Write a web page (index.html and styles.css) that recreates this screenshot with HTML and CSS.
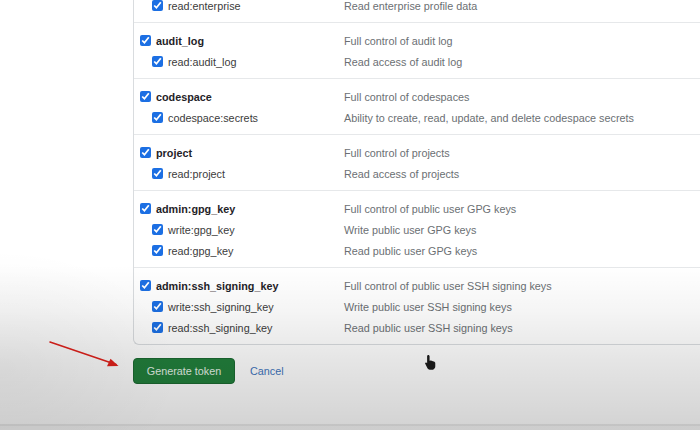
FILE: index.html
```html
<!DOCTYPE html>
<html lang="en">
<head>
<meta charset="utf-8">
<title>Scopes</title>
<link rel="stylesheet" href="styles.css">
</head>
<body>
<div class="page">
  <div class="scopes">
    <div class="group group-first">
      <label class="row child"><span class="name"><input type="checkbox" checked>read:enterprise</span><span class="desc">Read enterprise profile data</span></label>
    </div>
    <div class="group">
      <label class="row parent"><span class="name"><input type="checkbox" checked>audit_log</span><span class="desc">Full control of audit log</span></label>
      <label class="row child"><span class="name"><input type="checkbox" checked>read:audit_log</span><span class="desc">Read access of audit log</span></label>
    </div>
    <div class="group">
      <label class="row parent"><span class="name"><input type="checkbox" checked>codespace</span><span class="desc">Full control of codespaces</span></label>
      <label class="row child"><span class="name"><input type="checkbox" checked>codespace:secrets</span><span class="desc">Ability to create, read, update, and delete codespace secrets</span></label>
    </div>
    <div class="group">
      <label class="row parent"><span class="name"><input type="checkbox" checked>project</span><span class="desc">Full control of projects</span></label>
      <label class="row child"><span class="name"><input type="checkbox" checked>read:project</span><span class="desc">Read access of projects</span></label>
    </div>
    <div class="group">
      <label class="row parent"><span class="name"><input type="checkbox" checked>admin:gpg_key</span><span class="desc">Full control of public user GPG keys</span></label>
      <label class="row child"><span class="name"><input type="checkbox" checked>write:gpg_key</span><span class="desc">Write public user GPG keys</span></label>
      <label class="row child"><span class="name"><input type="checkbox" checked>read:gpg_key</span><span class="desc">Read public user GPG keys</span></label>
    </div>
    <div class="group">
      <label class="row parent"><span class="name"><input type="checkbox" checked>admin:ssh_signing_key</span><span class="desc">Full control of public user SSH signing keys</span></label>
      <label class="row child"><span class="name"><input type="checkbox" checked>write:ssh_signing_key</span><span class="desc">Write public user SSH signing keys</span></label>
      <label class="row child"><span class="name"><input type="checkbox" checked>read:ssh_signing_key</span><span class="desc">Read public user SSH signing keys</span></label>
    </div>
  </div>
  <div class="actions">
    <button class="btn-primary" type="button">Generate token</button>
    <a class="cancel" href="#">Cancel</a>
  </div>
</div>

<svg class="arrow" width="80" height="34" viewBox="0 0 80 34" aria-hidden="true">
  <line x1="1" y1="1" x2="67" y2="23.5" stroke="#e3221c" stroke-width="1.6" stroke-linecap="round"/>
  <path d="M69.5 25 L58 25.3 L61.5 17.8 Z" fill="#e3221c"/>
</svg>

<svg class="cursor" width="14" height="17" viewBox="0 0 16 20" aria-hidden="true">
  <path d="M6 1.2c.8 0 1.5.7 1.5 1.5v5.2l1.2-.2 1.4.3 1.3.4 1.2.4c.9.3 1.6 1 1.6 2v4c0 1.6-1 3-2.6 3.7H7.6c-1 0-2-.8-2.6-1.7L2.4 11.6c-.4-.7 0-1.5.8-1.7.5-.1 1 .2 1.3.6l.1.6V2.7c0-.8.6-1.5 1.4-1.5z" fill="#1c1c1c"/>
</svg>

<div class="vignette" aria-hidden="true"></div>
</body>
</html>
```

FILE: styles.css
```css
html, body {
  margin: 0;
  padding: 0;
  background: #ffffff;
  width: 700px;
  height: 430px;
  overflow: hidden;
}

body {
  font-family: "Liberation Sans", Arial, sans-serif;
  font-size: 10.8px;
  color: #333333;
  position: relative;
}

.page {
  padding-left: 133px;
}

.scopes {
  margin-top: -5px;
  margin-right: -20px;
  background: #ffffff;
  border-left: 1px solid #d9dcdf;
  border-bottom: 1px solid #d9dcdf;
  border-bottom-left-radius: 6px;
}

.group {
  padding: 7px 0 6px 6px;
  border-top: 1px solid #e6e8ea;
}

.group-first {
  border-top: 0;
  padding-top: 0;
}

.row {
  display: grid;
  grid-template-columns: 204px 1fr;
  height: 21px;
  align-items: center;
  cursor: default;
}

.name {
  display: flex;
  align-items: center;
  gap: 5px;
  white-space: nowrap;
}

.child .name {
  padding-left: 12px;
  color: #3c3c3c;
}

.parent .name {
  font-weight: bold;
  color: #1f2328;
}

.desc {
  color: #6b6f73;
  white-space: nowrap;
}

input[type="checkbox"] {
  width: 11px;
  height: 11px;
  margin: 0;
  accent-color: #1c6fe3;
  flex: none;
}

.actions {
  display: flex;
  align-items: center;
  gap: 15px;
  margin-top: 13px;
}

.btn-primary {
  font-family: inherit;
  font-size: 10.8px;
  height: 26px;
  width: 102px;
  padding: 0;
  border: 1px solid #1b6a31;
  border-radius: 4px;
  background: #22803c;
  color: #e4f2e7;
  cursor: pointer;
}

.cancel {
  color: #4175bd;
  text-decoration: none;
  font-size: 10.8px;
}

.arrow {
  position: absolute;
  left: 49px;
  top: 341px;
}

.cursor {
  position: absolute;
  left: 423px;
  top: 354px;
}

.vignette {
  position: absolute;
  inset: 0;
  pointer-events: none;
  background:
    linear-gradient(to bottom, rgba(0,0,0,0) 424px, rgba(0,0,0,0.08) 424px, rgba(0,0,0,0.08) 426px, rgba(0,0,0,0.03) 426px),
    radial-gradient(ellipse 180px 120px at 0% 86%, rgba(0,0,0,0.05), rgba(0,0,0,0) 100%),
    linear-gradient(to bottom, rgba(0,0,0,0) 0, rgba(0,0,0,0) 265px, rgba(0,0,0,0.04) 310px, rgba(0,0,0,0.1) 360px, rgba(0,0,0,0.17) 424px);
}
```
